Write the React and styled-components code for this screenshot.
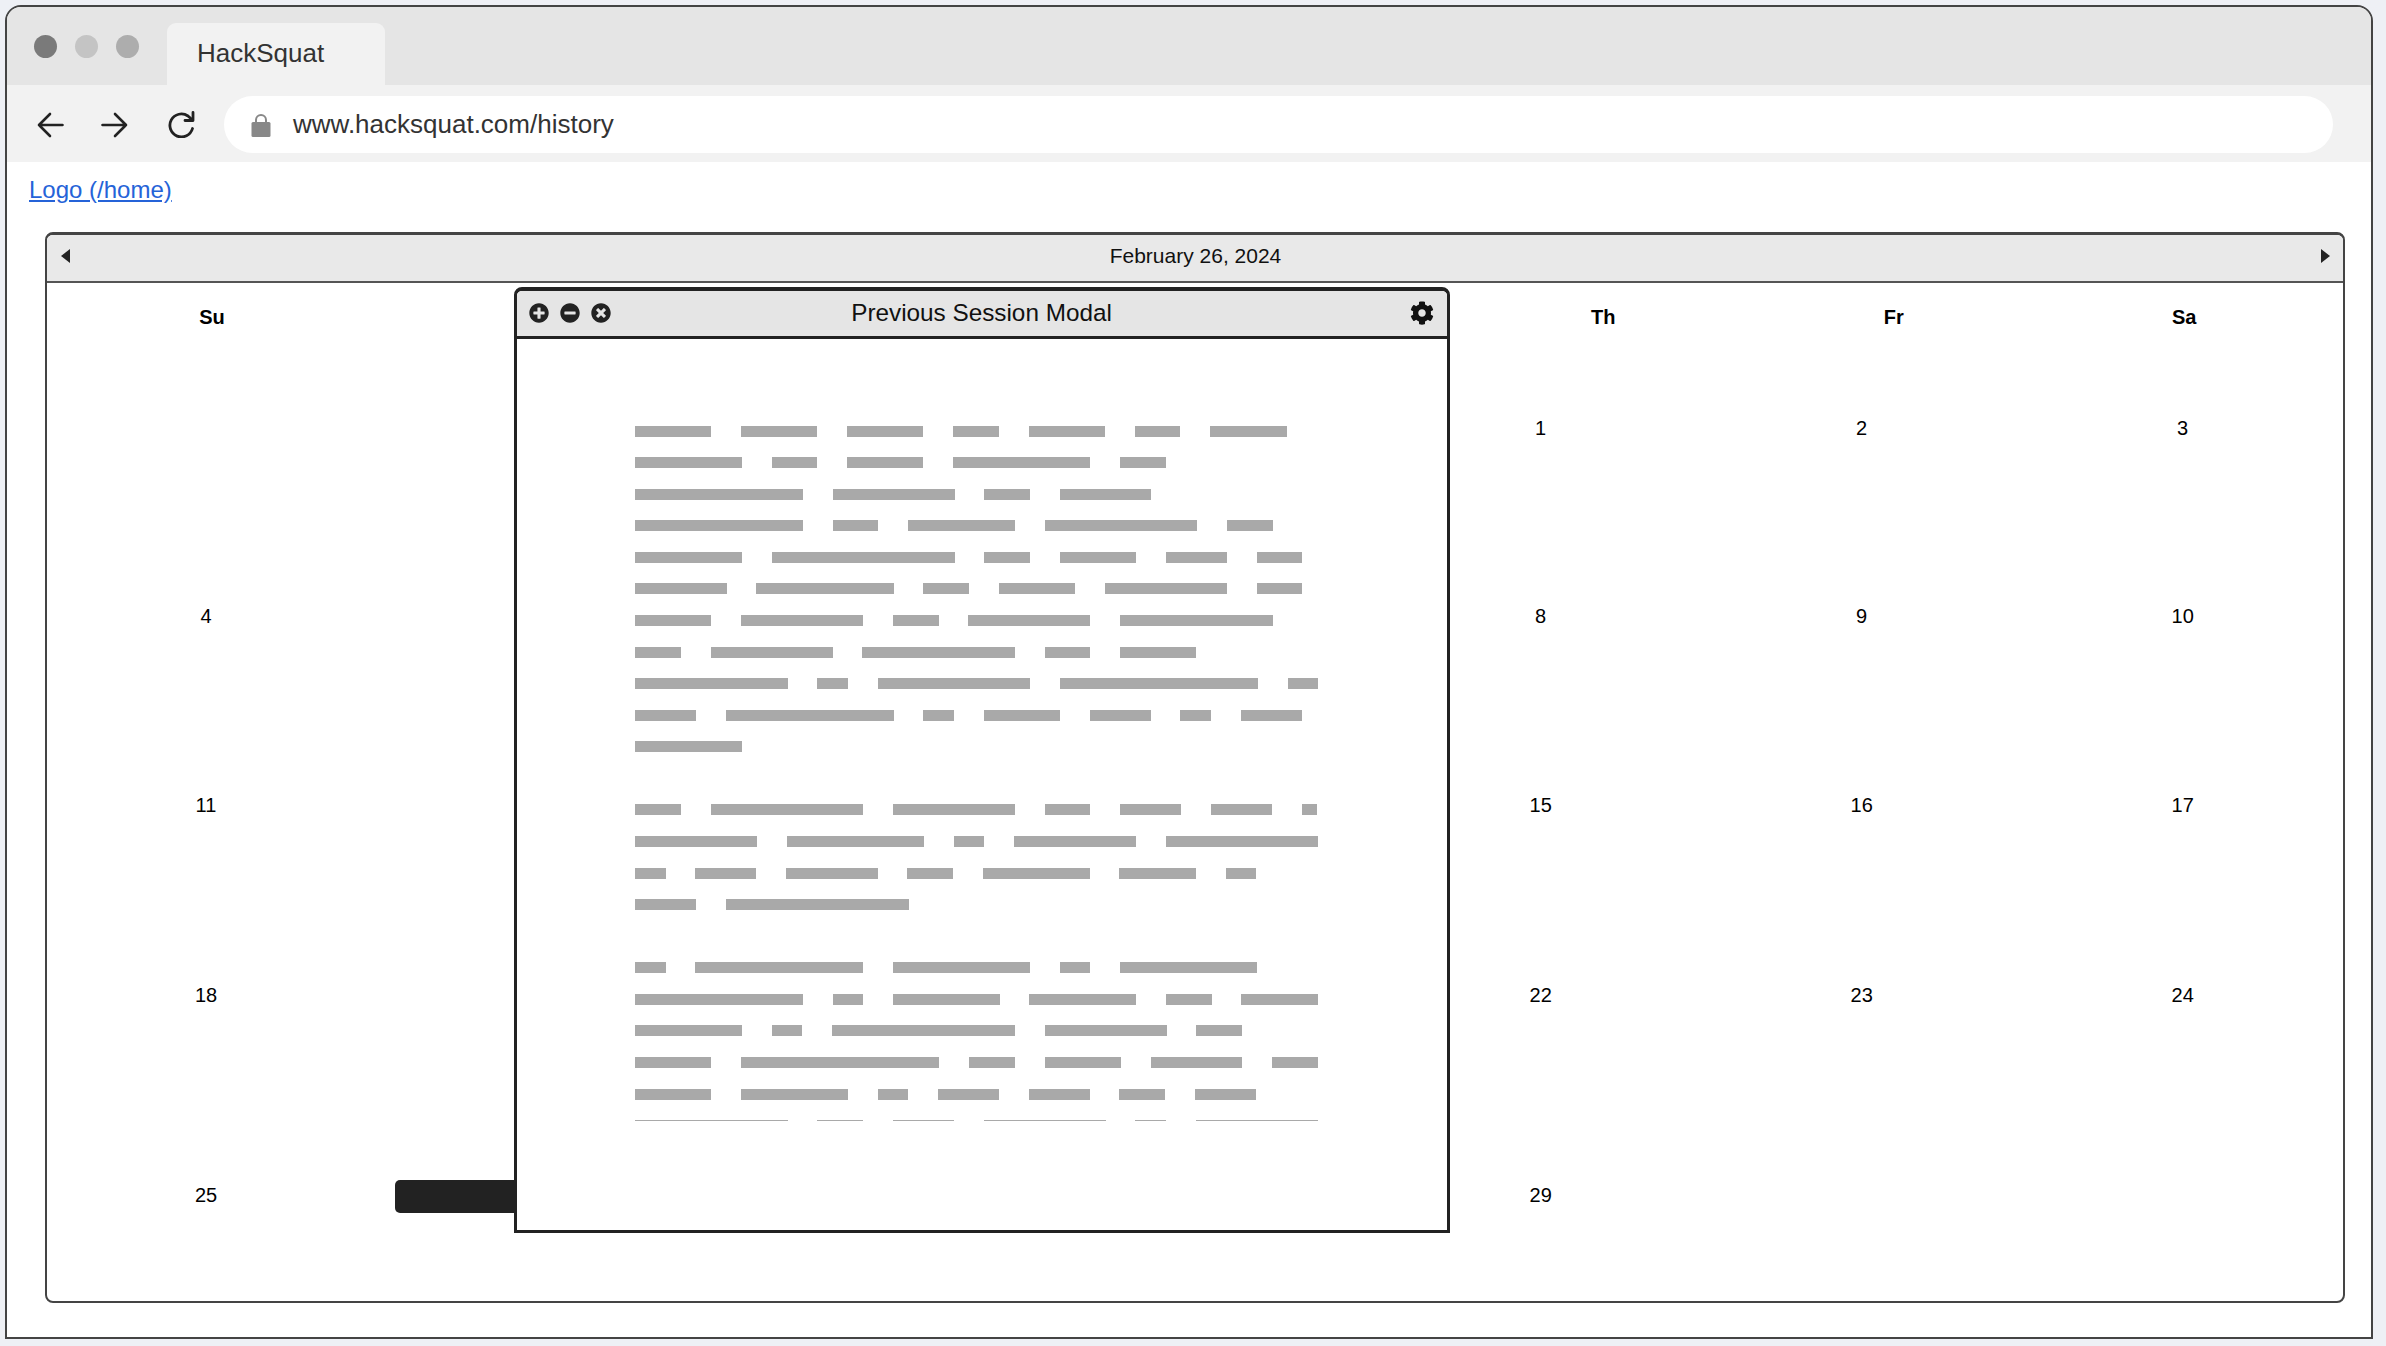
import React from 'react';
import styled, { createGlobalStyle } from 'styled-components';
import { FaPlusCircle, FaMinusCircle, FaTimesCircle, FaCog } from 'react-icons/fa';

const Global = createGlobalStyle`
  html, body { margin: 0; padding: 0; background: #eef0f5; }
  body { font-family: "Liberation Sans", Arial, sans-serif; }
  * { box-sizing: border-box; }
`;

const Page = styled.div`
  width: 2386px;
  height: 1346px;
  padding: 5px 13px 7px 5px;
`;
const Frame = styled.div`
  height: 100%;
  border: 2px solid #444;
  border-radius: 16px 16px 0 0;
  background: #fff;
  overflow: hidden;
  display: flex;
  flex-direction: column;
`;
const TabBar = styled.div`
  flex: none;
  height: 78px;
  background: #e5e5e5;
  display: flex;
  align-items: flex-end;
  padding-left: 27px;
`;
const Dots = styled.div`
  display: flex;
  gap: 18px;
  align-self: flex-start;
  margin-top: 28px;
  margin-right: 28px;
`;
const Dot = styled.span`
  width: 23px;
  height: 23px;
  border-radius: 50%;
  background: ${p => p.$color};
`;
const Tab = styled.div`
  width: 218px;
  height: 62px;
  background: #f2f2f2;
  border-radius: 9px 9px 0 0;
  padding: 15px 0 0 30px;
  font-size: 26px;
  line-height: 30px;
  color: #333;
`;
const NavBar = styled.div`
  flex: none;
  height: 77px;
  background: #f2f2f2;
  display: flex;
  align-items: center;
  padding: 2px 38px 0 30px;
`;
const NavIcons = styled.div`
  display: flex;
  align-items: center;
  color: #222;
  width: 187px;
  gap: 37px;
`;
const ReloadSlot = styled.span`
  display: flex;
  margin-left: 3px;
`;
const UrlPill = styled.div`
  flex: 1;
  height: 57px;
  background: #fff;
  border-radius: 29px;
  display: flex;
  align-items: center;
  padding-left: 27px;
  gap: 22px;
  font-size: 26px;
  color: #333;
`;
const Content = styled.div`
  flex: 1;
  min-height: 0;
  padding: 0 26px 34px 38px;
  display: flex;
  flex-direction: column;
`;
const LogoLink = styled.a`
  flex: none;
  height: 70px;
  margin-left: -16px;
  padding-top: 14px;
  font-size: 24px;
  line-height: 28px;
  color: #2563d8;
  text-decoration: underline;
`;
const Calendar = styled.div`
  position: relative;
  flex: 1;
  min-height: 0;
  border: 2px solid #444;
  border-top-width: 3px;
  border-radius: 8px;
`;
const CalHeader = styled.div`
  height: 48px;
  background: #e9e9e9;
  border-bottom: 2px solid #555;
  border-radius: 6px 6px 0 0;
  display: flex;
  align-items: center;
  justify-content: space-between;
  padding: 0 13px 4px 14px;
  font-size: 21px;
  color: #111;
`;
const WeekRow = styled.div`
  display: grid;
  grid-template-columns: 330px repeat(3, 360.33px) repeat(3, 290.5px);
  padding: 22px 0 5px;
`;
const WeekDay = styled.div`
  text-align: center;
  font-weight: 700;
  font-size: 20px;
  line-height: 24px;
  color: #000;
`;
const DateGrid = styled.div`
  display: grid;
  grid-template-columns: 318px repeat(3, 338.4px) repeat(3, 321px);
  grid-template-rows: 188px 188px 190px 190px 210px;
`;
const DayCell = styled.div`
  display: flex;
  align-items: center;
  justify-content: center;
  position: relative;
  font-size: 20px;
  color: #000;
`;
const EventBar = styled.div`
  position: absolute;
  left: 30px;
  top: 90px;
  width: 150px;
  height: 33px;
  background: #222;
  border-radius: 5px;
`;
const Modal = styled.div`
  position: absolute;
  left: 467px;
  top: 52px;
  width: 936px;
  height: 946px;
  background: #fff;
  border: 3px solid #222;
  border-top-width: 4px;
  border-radius: 8px 8px 0 0;
  display: flex;
  flex-direction: column;
`;
const ModalHeader = styled.div`
  height: 48px;
  flex: none;
  background: #e5e5e5;
  border-bottom: 3px solid #222;
  border-radius: 5px 5px 0 0;
  display: flex;
  align-items: center;
  justify-content: space-between;
  padding: 0 13px 2px 12px;
`;
const ModalControls = styled.div`
  display: flex;
  gap: 11px;
  width: 110px;
  color: #222;
  font-size: 20px;
`;
const ModalTitle = styled.div`
  font-size: 24.3px;
  color: #111;
`;
const GearSlot = styled.div`
  width: 110px;
  display: flex;
  justify-content: flex-end;
  color: #111;
  font-size: 24px;
`;
const ModalBody = styled.div`
  flex: 1;
  padding: 86.5px 0 0 118px;
`;
const TextClip = styled.div`
  height: 695.5px;
  overflow: hidden;
  display: flex;
  flex-direction: column;
  gap: 52px;
`;
const Para = styled.div`
  display: flex;
  flex: none;
  flex-direction: column;
  gap: 20.6px;
`;
const Line = styled.div`
  display: flex;
  flex: none;
  gap: 29.8px;
  height: 11px;
`;
const Word = styled.span`
  height: 11px;
  width: ${p => p.$units * 15.25}px;
  background: #a9a9a9;
`;

const paragraphs = [
  [
    [5, 5, 5, 3, 5, 3, 5],
    [7, 3, 5, 9, 3],
    [11, 8, 3, 6],
    [11, 3, 7, 10, 3],
    [7, 12, 3, 5, 4, 3],
    [6, 9, 3, 5, 8, 3],
    [5, 8, 3, 8, 10],
    [3, 8, 10, 3, 5],
    [10, 2, 10, 13, 2],
    [4, 11, 2, 5, 4, 2, 4],
    [7],
  ],
  [
    [3, 10, 8, 3, 4, 4, 1],
    [8, 9, 2, 8, 10],
    [2, 4, 6, 3, 7, 5, 2],
    [4, 12],
  ],
  [
    [2, 11, 9, 2, 9],
    [11, 2, 7, 7, 3, 5],
    [7, 2, 12, 8, 3],
    [5, 13, 3, 5, 6, 3],
    [5, 7, 2, 4, 4, 3, 4],
    [10, 3, 4, 8, 2, 8],
  ],
];

const weekDays = ['Su', 'Mo', 'Tu', 'We', 'Th', 'Fr', 'Sa'];
const days = [null, null, null, null, ...Array.from({ length: 29 }, (_, i) => i + 1)];

const BackIcon = () => (
  <svg width="27" height="26" viewBox="0 0 27 26" fill="none" stroke="currentColor" strokeWidth="2.6" strokeLinecap="round" strokeLinejoin="round">
    <path d="M25.5 13H2M13 2 2 13l11 11" />
  </svg>
);
const ForwardIcon = () => (
  <svg width="27" height="26" viewBox="0 0 27 26" fill="none" stroke="currentColor" strokeWidth="2.6" strokeLinecap="round" strokeLinejoin="round">
    <path d="M1.5 13H25M14 2l11 11-11 11" />
  </svg>
);
const ReloadIcon = () => (
  <svg width="27" height="27" viewBox="0 0 27 27" fill="none" stroke="currentColor" strokeWidth="2.8" strokeLinecap="round" strokeLinejoin="round">
    <path d="M24.5 17.5A11.5 11.5 0 1 1 20 5l4.5 4" />
    <path d="M25 1.5V9.5H17" />
  </svg>
);
const LockIcon = () => (
  <svg width="20" height="24" viewBox="0 0 20 24">
    <path d="M5 11V7a5 5 0 0 1 10 0v4" fill="none" stroke="#888" strokeWidth="2" />
    <rect x="0.5" y="9" width="19" height="15" rx="1.5" fill="#888" />
  </svg>
);
const Triangle = ({ dir }) => (
  <svg width="9" height="14" viewBox="0 0 9 14">
    <path d={dir === 'left' ? 'M9 0v14L0 7z' : 'M0 0v14l9-7z'} fill="#222" />
  </svg>
);

export default function App() {
  return (
    <Page>
      <Global />
      <Frame>
        <TabBar>
          <Dots>
            <Dot $color="#7a7a7a" />
            <Dot $color="#c4c4c4" />
            <Dot $color="#adadad" />
          </Dots>
          <Tab>HackSquat</Tab>
        </TabBar>
        <NavBar>
          <NavIcons>
            <BackIcon />
            <ForwardIcon />
            <ReloadSlot><ReloadIcon /></ReloadSlot>
          </NavIcons>
          <UrlPill>
            <LockIcon />
            www.hacksquat.com/history
          </UrlPill>
        </NavBar>
        <Content>
          <LogoLink href="#">Logo (/home)</LogoLink>
          <Calendar>
            <CalHeader>
              <Triangle dir="left" />
              February 26, 2024
              <Triangle dir="right" />
            </CalHeader>
            <WeekRow>
              {weekDays.map(d => <WeekDay key={d}>{d}</WeekDay>)}
            </WeekRow>
            <DateGrid>
              {days.map((d, i) => (
                <DayCell key={i}>
                  {d}
                  {d === 26 && <EventBar />}
                </DayCell>
              ))}
            </DateGrid>
            <Modal>
              <ModalHeader>
                <ModalControls>
                  <FaPlusCircle />
                  <FaMinusCircle />
                  <FaTimesCircle />
                </ModalControls>
                <ModalTitle>Previous Session Modal</ModalTitle>
                <GearSlot><FaCog /></GearSlot>
              </ModalHeader>
              <ModalBody>
                <TextClip>
                  {paragraphs.map((p, i) => (
                    <Para key={i}>
                      {p.map((line, j) => (
                        <Line key={j}>
                          {line.map((u, k) => <Word key={k} $units={u} />)}
                        </Line>
                      ))}
                    </Para>
                  ))}
                </TextClip>
              </ModalBody>
            </Modal>
          </Calendar>
        </Content>
      </Frame>
    </Page>
  );
}
